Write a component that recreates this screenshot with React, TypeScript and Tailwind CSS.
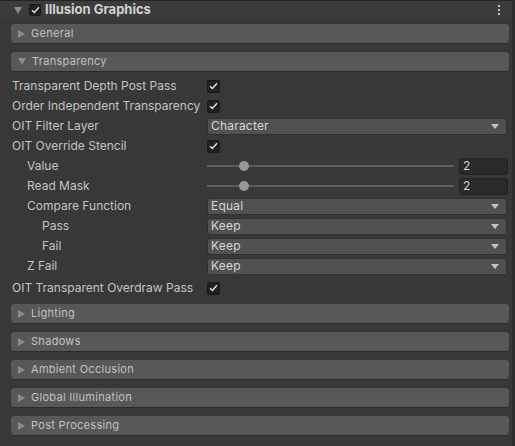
import React from "react";

const font = { fontFamily: "Inter, 'Noto Sans', sans-serif" };

function Check() {
  return (
    <div className="w-[13px] h-[13px] rounded-[2px] bg-[#202020] border border-[#191919] flex items-center justify-center">
      <svg width="9" height="8" viewBox="0 0 9 8">
        <path d="M1 4.2 L3.4 6.5 L8 1.2" fill="none" stroke="#e0e0e0" strokeWidth="1.5" />
      </svg>
    </div>
  );
}

function Arrow({ open, color = "#8a8a8a" }: { open?: boolean; color?: string }) {
  return open ? (
    <svg width="8" height="7" viewBox="0 0 8 7">
      <path d="M0 0 L8 0 L4 7 Z" fill={color} />
    </svg>
  ) : (
    <svg width="7" height="8" viewBox="0 0 7 8">
      <path d="M0 0 L7 4 L0 8 Z" fill={color} />
    </svg>
  );
}

function SectionBar({ title, open }: { title: string; open?: boolean }) {
  return (
    <div className="mx-[11px] w-[498px] h-[19px] rounded-[3px] bg-[#585858] shadow-[0_1px_0_#2a2a2a] flex items-center pl-[7px] gap-[6px]">
      <Arrow open={open} />
      <span className="text-[11px] text-[#c2c2c2] tracking-[0.3px]">{title}</span>
    </div>
  );
}

function Dropdown({ value }: { value: string }) {
  return (
    <div className="w-[300px] h-[17px] rounded-[3px] bg-[#515151] border border-[#303030] flex items-center justify-between pl-[3px] pr-[7px]">
      <span className="text-[12px] text-[#d6d6d6] tracking-[0.2px]">{value}</span>
      <svg width="8" height="5" viewBox="0 0 8 5">
        <path d="M0 0 L8 0 L4 5 Z" fill="#c4c4c4" />
      </svg>
    </div>
  );
}

function Slider({ value }: { value: string }) {
  return (
    <div className="w-[301px] flex items-center gap-[5px]">
      <div className="relative w-[247px] h-[10px] flex items-center">
        <div className="w-full h-[2px] bg-[#5e5e5e]" />
        <div className="absolute left-[32px] top-0 w-[10px] h-[10px] rounded-full bg-[#999999]" />
      </div>
      <div className="w-[49px] h-[17px] rounded-[3px] bg-[#2a2a2a] border border-[#202020] flex items-center pl-[3px]">
        <span className="text-[12px] text-[#d2d2d2]">{value}</span>
      </div>
    </div>
  );
}

function Row({ label, indent = 0, children, className = "" }: { label: string; indent?: number; children: React.ReactNode; className?: string }) {
  const pad = indent === 2 ? "pl-[42px]" : indent === 1 ? "pl-[27px]" : "pl-[12px]";
  return (
    <div className={`h-[20px] flex items-center ${className}`}>
      <div className={`w-[207px] ${pad} text-[12px] text-[#c4c4c4] whitespace-nowrap`}>{label}</div>
      {children}
    </div>
  );
}

export default function App() {
  return (
    <div className="w-[515px] h-[446px] bg-[#383838] flex" style={font}>
      <div className="w-[512px] flex flex-col">
        <div className="h-[19px] bg-[#3c3c3c] border-t border-[#232323] flex items-center pl-[14px] pr-[12px]">
          <Arrow open />
          <div className="ml-[7px] w-[12px] h-[12px] rounded-[2px] bg-[#202020] border border-[#191919] flex items-center justify-center">
            <svg width="9" height="8" viewBox="0 0 9 8">
              <path d="M1 4.2 L3.4 6.5 L8 1.2" fill="none" stroke="#e0e0e0" strokeWidth="1.5" />
            </svg>
          </div>
          <span className="ml-[4px] text-[13px] font-bold text-[#d2d2d2]">Illusion Graphics</span>
          <div className="ml-auto flex flex-col gap-[2px]">
            <div className="w-[2px] h-[2px] bg-[#c4c4c4]" />
            <div className="w-[2px] h-[2px] bg-[#c4c4c4]" />
            <div className="w-[2px] h-[2px] bg-[#c4c4c4]" />
          </div>
        </div>
        <div className="mt-[5px] flex flex-col gap-[9px]">
          <SectionBar title="General" />
          <SectionBar title="Transparency" open />
        </div>
        <div className="mt-[5px] flex flex-col">
          <Row label="Transparent Depth Post Pass"><Check /></Row>
          <Row label="Order Independent Transparency"><Check /></Row>
          <Row label="OIT Filter Layer"><Dropdown value="Character" /></Row>
          <Row label="OIT Override Stencil"><Check /></Row>
          <Row label="Value" indent={1}><Slider value="2" /></Row>
          <Row label="Read Mask" indent={1}><Slider value="2" /></Row>
          <Row label="Compare Function" indent={1}><Dropdown value="Equal" /></Row>
          <Row label="Pass" indent={2}><Dropdown value="Keep" /></Row>
          <Row label="Fail" indent={2}><Dropdown value="Keep" /></Row>
          <Row label="Z Fail" indent={1}><Dropdown value="Keep" /></Row>
          <Row label="OIT Transparent Overdraw Pass" className="mt-[2px]"><Check /></Row>
        </div>
        <div className="mt-[6px] flex flex-col gap-[9px]">
          <SectionBar title="Lighting" />
          <SectionBar title="Shadows" />
          <SectionBar title="Ambient Occlusion" />
          <SectionBar title="Global Illumination" />
          <SectionBar title="Post Processing" />
        </div>
      </div>
      <div className="w-[3px] bg-[#2e2e2e]" />
    </div>
  );
}
